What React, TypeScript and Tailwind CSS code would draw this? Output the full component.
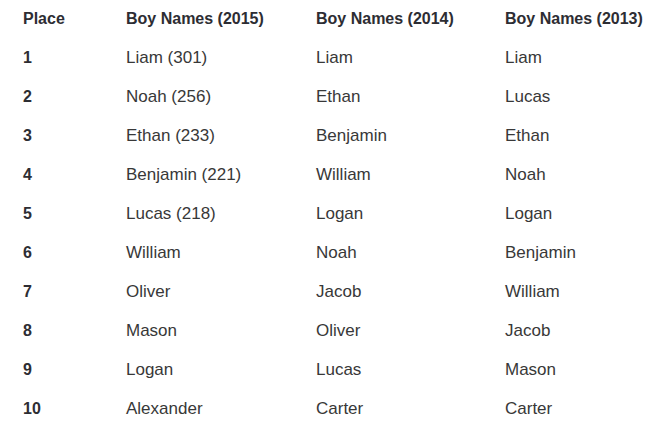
const rows = [
  ["1", "Liam (301)", "Liam", "Liam"],
  ["2", "Noah (256)", "Ethan", "Lucas"],
  ["3", "Ethan (233)", "Benjamin", "Ethan"],
  ["4", "Benjamin (221)", "William", "Noah"],
  ["5", "Lucas (218)", "Logan", "Logan"],
  ["6", "William", "Noah", "Benjamin"],
  ["7", "Oliver", "Jacob", "William"],
  ["8", "Mason", "Oliver", "Jacob"],
  ["9", "Logan", "Lucas", "Mason"],
  ["10", "Alexander", "Carter", "Carter"],
];

export default function App() {
  return (
    <div className="w-[657px] h-[429px] bg-white pl-[23px] text-[#383838] font-['Liberation_Sans',Arial,sans-serif] overflow-hidden">
      <div className="grid grid-cols-[103px_190px_189px_1fr] h-[38px] pb-[1px] items-center text-[16px] font-bold text-[#2d2d33]">
        <div>Place</div>
        <div>Boy Names (2015)</div>
        <div>Boy Names (2014)</div>
        <div>Boy Names (2013)</div>
      </div>
      {rows.map((r) => (
        <div
          key={r[0]}
          className="grid grid-cols-[103px_190px_189px_1fr] h-[39px] items-center text-[17px]"
        >
          <div className="font-bold text-[16px] text-[#2d2d33]">{r[0]}</div>
          <div>{r[1]}</div>
          <div>{r[2]}</div>
          <div>{r[3]}</div>
        </div>
      ))}
    </div>
  );
}
